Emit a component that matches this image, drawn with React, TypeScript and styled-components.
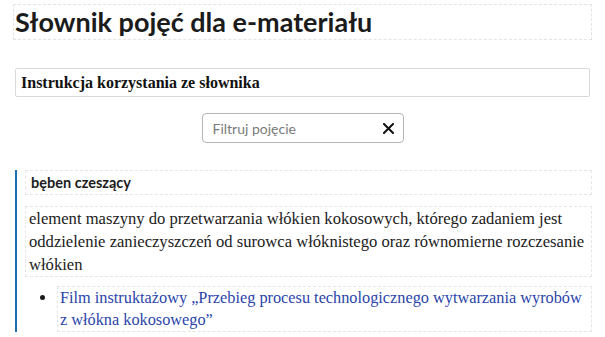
import React from 'react';
import styled, { createGlobalStyle } from 'styled-components';

const GlobalStyle = createGlobalStyle`
  html, body {
    margin: 0;
    padding: 0;
    background: #fff;
  }
  body {
    font-family: 'Liberation Serif', serif;
    color: #1b1b1b;
  }
`;

const Page = styled.div`
  width: 579px;
  padding: 4px 0 0 13px;
`;

const Title = styled.h1`
  margin: 0;
  padding: 0 1px;
  border: 1px dashed #e4e4e4;
  font-family: Lato, sans-serif;
  font-weight: 700;
  font-size: 27px;
  line-height: 34px;
  color: #1b1b1b;
`;

const Instructions = styled.div`
  margin: 28px 2px 0 2px;
  height: 27px;
  display: flex;
  align-items: center;
  padding: 0 5px;
  border: 1px solid #d9d9d9;
  border-radius: 2px;
  font-weight: 700;
  font-size: 16px;
  color: #111;
`;

const FilterRow = styled.div`
  display: flex;
  justify-content: center;
  margin-top: 16px;
`;

const FilterBox = styled.label`
  box-sizing: border-box;
  width: 202px;
  height: 30px;
  display: flex;
  align-items: center;
  border: 1px solid #b5b5b5;
  border-radius: 4px;
  padding: 0 9px 0 10px;
`;

const FilterInput = styled.input`
  flex: 1;
  min-width: 0;
  border: none;
  outline: none;
  padding: 0;
  font-family: Lato, sans-serif;
  font-size: 14px;
  color: #333;
  background: transparent;

  &::placeholder {
    color: #7a7a7a;
  }
`;

const ClearButton = styled.button`
  border: none;
  background: none;
  padding: 0;
  display: flex;
  align-items: center;
  cursor: pointer;
`;

const Term = styled.section`
  margin: 27px 0 0 2px;
  padding: 0 0 0 8px;
  border-left: 2px solid #1f6fb3;
`;

const TermName = styled.h2`
  margin: 0;
  padding: 0 5px;
  height: 23px;
  display: flex;
  align-items: center;
  border: 1px dashed #e6e6e6;
  font-family: Lato, sans-serif;
  font-weight: 700;
  font-size: 14.5px;
  color: #1b1b1b;
`;

const Definition = styled.p`
  margin: 11px 0 0 0;
  padding: 0 1px 0 3px;
  border: 1px dashed #e6e6e6;
  font-size: 16.6px;
  line-height: 23px;
  color: #1b1b1b;
`;

const Links = styled.ul`
  margin: 9px 0 0 0;
  padding: 0 0 0 32px;
`;

const LinkItem = styled.li`
  font-size: 16.3px;
  line-height: 22px;
  color: #1b1b1b;
`;

const LinkText = styled.a`
  display: block;
  border: 1px dashed #e6e6e6;
  padding: 0 0 0 2px;
  color: #2a45aa;
  text-decoration: none;
`;

const CloseIcon = () => (
  <svg width="11" height="11" viewBox="0 0 11 11" fill="none">
    <path d="M1 1 L10 10 M10 1 L1 10" stroke="#111" strokeWidth="2" strokeLinecap="square" />
  </svg>
);

export default function App() {
  return (
    <>
      <GlobalStyle />
      <Page>
        <Title>Słownik pojęć dla e-materiału</Title>
        <Instructions>Instrukcja korzystania ze słownika</Instructions>
        <FilterRow>
          <FilterBox>
            <FilterInput placeholder="Filtruj pojęcie" />
            <ClearButton aria-label="Wyczyść">
              <CloseIcon />
            </ClearButton>
          </FilterBox>
        </FilterRow>
        <Term>
          <TermName>bęben czeszący</TermName>
          <Definition>
            element maszyny do przetwarzania włókien kokosowych, którego zadaniem jest oddzielenie
            zanieczyszczeń od surowca włóknistego oraz równomierne rozczesanie włókien
          </Definition>
          <Links>
            <LinkItem>
              <LinkText href="#">
                Film instruktażowy „Przebieg procesu technologicznego wytwarzania wyrobów z włókna
                kokosowego”
              </LinkText>
            </LinkItem>
          </Links>
        </Term>
      </Page>
    </>
  );
}
